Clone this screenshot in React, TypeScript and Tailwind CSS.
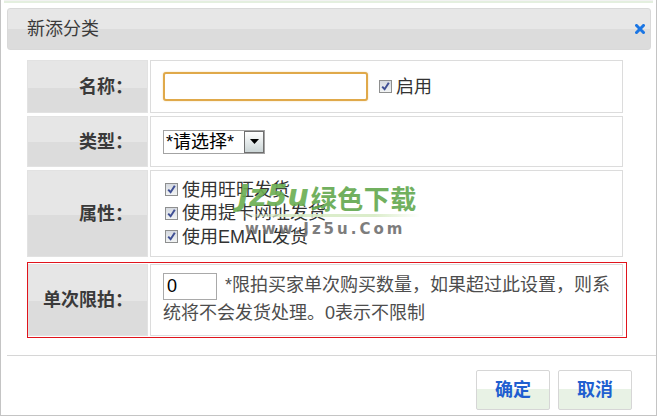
import React from "react";

function Check() {
  return (
    <span className="inline-flex items-center justify-center w-[13px] h-[13px] border border-[#8e8f8f] bg-[linear-gradient(#d5d9e0,#f2f4f4)] shrink-0">
      <svg viewBox="0 0 11 11" className="w-[11px] h-[11px]">
        <path d="M2.2 5.6 L4.6 8.2 L8.8 1.8" stroke="#3f4f94" strokeWidth="2" fill="none" />
      </svg>
    </span>
  );
}

function Label({ text }: { text: string }) {
  return (
    <div className="w-[121px] h-full border border-[#e2e2e2] bg-[linear-gradient(#e6e6e6_52%,#dcdcdc_52%)] flex items-center justify-end pr-[14px] text-[18px] leading-none font-bold text-[#3a3a3a]">
      {text}
    </div>
  );
}

export default function App() {
  return (
    <div className="w-[659px] h-[416px] bg-white relative overflow-hidden font-['Liberation_Sans','Noto_Sans_CJK_SC',sans-serif] text-[#333]">
      <div className="w-[657px] h-[416px] border-x border-b border-[#c4c4c4] flex flex-col">
        <div className="h-[3px] mx-[3px] bg-[#e4efdf] border-t border-[#f2f2f2]" />
        {/* header */}
        <div className="mt-[5px] ml-[6px] w-[644px] h-[42px] rounded-[3px] border border-[#d9d9d9] bg-[linear-gradient(#e7e7e7_50%,#dcdcdc_50%)] flex items-center justify-between pl-[19px] pr-[5px]">
          <span className="text-[18px] leading-none text-[#3a3a3a]">新添分类</span>
          <svg width="10" height="10" viewBox="0 0 10 10">
            <path d="M1.5 1.5 L8.5 8.5 M8.5 1.5 L1.5 8.5" stroke="#1b76e4" strokeWidth="3" strokeLinecap="square" />
          </svg>
        </div>

        {/* form table */}
        <div className="mt-[10px] ml-[26px] w-[596px] flex flex-col gap-[3px]">
          <div className="h-[53px] flex gap-[2px]">
            <Label text="名称：" />
            <div className="flex-1 h-full border border-[#dcdcdc] flex items-center pl-[12px]">
              <div className="w-[205px] h-[29px] rounded-[3px] border-2 border-[#e0a94a] bg-white shadow-[0_0_2px_#f0d8a8]" />
              <span className="ml-[11px]"><Check /></span>
              <span className="ml-[4px] text-[18px] leading-none text-[#333]">启用</span>
            </div>
          </div>

          <div className="h-[51px] flex gap-[2px]">
            <Label text="类型：" />
            <div className="flex-1 h-full border border-[#dcdcdc] flex items-center pl-[12px]">
              <div className="w-[102px] h-[24px] border border-[#a3a3a3] bg-white flex items-center">
                <span className="flex-1 pl-[2px] text-[18px] leading-none text-black">*请选择*</span>
                <span className="w-[20px] h-[22px] border border-[#6f6f6f] bg-[linear-gradient(#ffffff,#cbd5d6)] flex items-center justify-center">
                  <svg width="9" height="5" viewBox="0 0 9 5">
                    <path d="M0 0 L9 0 L4.5 5 Z" fill="#000" />
                  </svg>
                </span>
              </div>
            </div>
          </div>

          <div className="h-[87px] flex gap-[2px]">
            <Label text="属性：" />
            <div className="flex-1 h-full border border-[#dcdcdc] flex flex-col pl-[14px] pt-[7px]">
              {["使用旺旺发货", "使用提卡网址发货", "使用EMAIL发货"].map((t) => (
                <div key={t} className="h-[23.5px] flex items-center">
                  <Check />
                  <span className="ml-[4px] text-[18px] leading-none text-[#333]">{t}</span>
                </div>
              ))}
            </div>
          </div>
        </div>

        <div className="mt-[5px] ml-[26px] w-[600px] h-[76px] border border-[#e0141c] p-[1px] pl-0 pr-[3px]">
          <div className="h-[72px] flex gap-[2px]">
            <div className="w-[120px] h-full border border-[#e2e2e2] bg-[linear-gradient(#e6e6e6_52%,#dcdcdc_52%)] flex items-center justify-end pr-[14px] text-[18px] leading-none font-bold text-[#3a3a3a]">
              单次限拍：
            </div>
            <div className="flex-1 h-full border border-[#dcdcdc] pl-[12px] pr-[8px] pt-[7px] text-[18px] leading-[26px] text-[#4d4d4d]">
              <span className="inline-block align-middle w-[54px] h-[27px] border border-[#a9a9a9] bg-white pl-[3px] text-black leading-[25px] mr-[8px]">0</span>
              *限拍买家单次购买数量，如果超过此设置，则系统将不会发货处理。0表示不限制
            </div>
          </div>
        </div>

        {/* separator */}
        <div className="mt-[17px] ml-[6px] h-px bg-[#d6d6d6]" />

        {/* buttons */}
        <div className="mt-[14px] flex justify-end gap-[8px] pr-[24px]">
          {["确定", "取消"].map((t) => (
            <div
              key={t}
              className="w-[74px] h-[40px] rounded-[2px] border border-[#d6d6d6] bg-[linear-gradient(#ffffff_48%,#e8f2e5_48%)] flex items-center justify-center text-[18px] leading-none font-bold text-[#1f5fd0]"
            >
              {t}
            </div>
          ))}
        </div>
      </div>

      {/* watermark overlay */}
      <div className="absolute left-[238px] top-[181px] pointer-events-none select-none opacity-90">
        <div className="flex items-end leading-none">
          <span className="text-[30px] font-bold italic text-[#6aae52] tracking-[0px] font-['DejaVu_Sans',sans-serif]">Jz5u</span>
          <span className="text-[26px] font-bold text-[#62a84e] tracking-[0.5px] font-['Noto_Sans_CJK_SC',sans-serif] ml-[2px]">绿色下载</span>
        </div>
        <div className="mt-[3px] h-[3px] w-[182px] bg-[linear-gradient(90deg,transparent,#d8ecc6_25%,#d8ecc6_75%,transparent)]" />
        <div className="mt-[5px] ml-[7px] text-[15px] leading-none font-bold text-[#707070] tracking-[3px] font-['DejaVu_Sans',sans-serif]">www.Jz5u.Com</div>
      </div>
    </div>
  );
}
